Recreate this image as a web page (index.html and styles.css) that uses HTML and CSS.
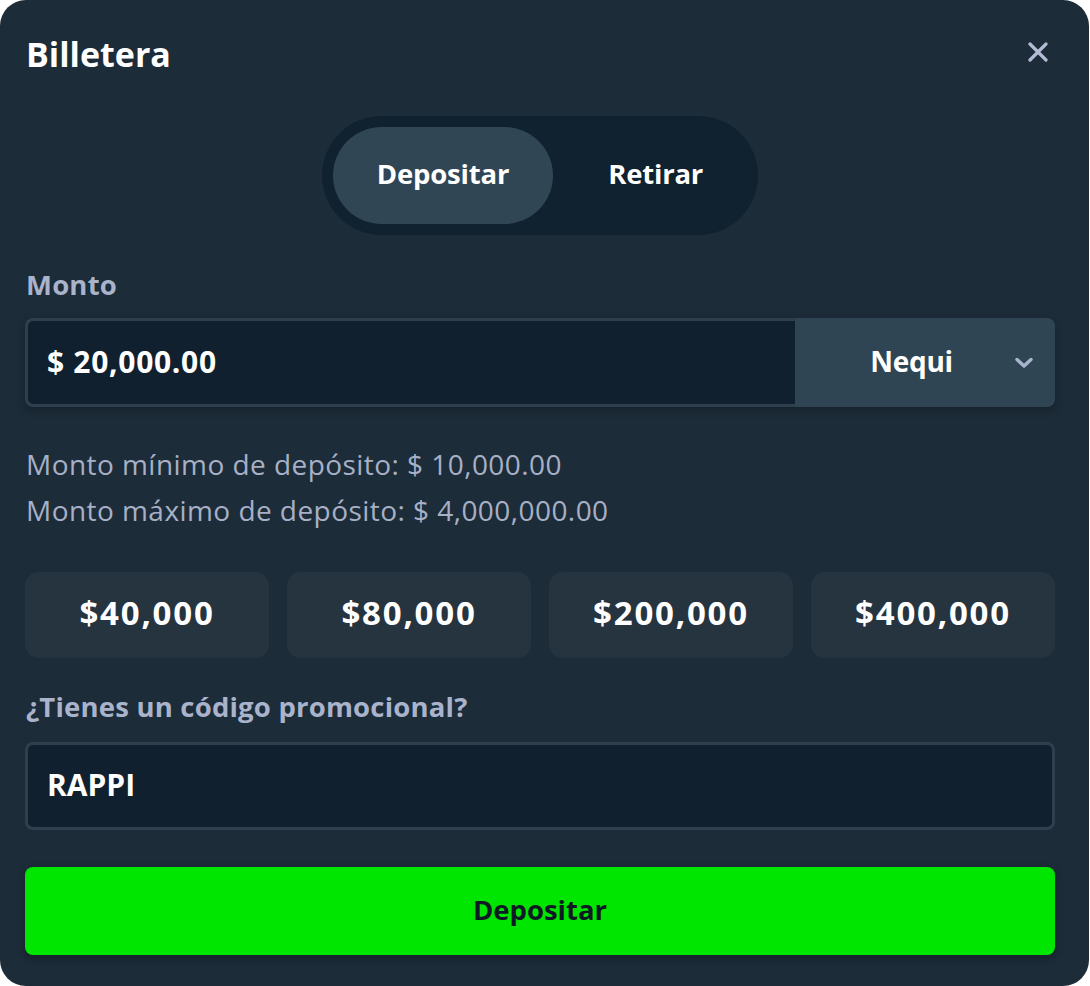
FILE: index.html
```html
<!DOCTYPE html>
<html lang="es">
<head>
<meta charset="utf-8">
<title>Billetera</title>
<link rel="stylesheet" href="styles.css">
</head>
<body>
<div class="modal">
  <div class="header">
    <h1 class="title">Billetera</h1>
    <button class="close" aria-label="Cerrar">
      <svg width="20" height="20" viewBox="0 0 20 20"><path d="M2 2 L18 18 M18 2 L2 18" stroke="#b3bcd4" stroke-width="3.2" stroke-linecap="round"/></svg>
    </button>
  </div>

  <div class="tabs-wrap">
    <div class="tabs">
      <button class="tab active">Depositar</button>
      <button class="tab">Retirar</button>
    </div>
  </div>

  <div class="label label-monto">Monto</div>
  <div class="amount-row">
    <div class="amount-input">$ 20,000.00</div>
    <div class="method">
      <span class="method-name">Nequi</span>
      <svg class="chev" width="20" height="12" viewBox="0 0 20 12"><path d="M3 2.5 L10 9 L17 2.5" fill="none" stroke="#a9b3cc" stroke-width="3.4" stroke-linecap="round" stroke-linejoin="round"/></svg>
    </div>
  </div>

  <div class="limits">
    <p>Monto mínimo de depósito: $ 10,000.00</p>
    <p>Monto máximo de depósito: $ 4,000,000.00</p>
  </div>

  <div class="quick">
    <button class="quick-btn">$40,000</button>
    <button class="quick-btn">$80,000</button>
    <button class="quick-btn">$200,000</button>
    <button class="quick-btn">$400,000</button>
  </div>

  <div class="label label-promo">¿Tienes un código promocional?</div>
  <div class="promo-input">RAPPI</div>

  <button class="submit">Depositar</button>
</div>
</body>
</html>
```

FILE: styles.css
```css
* { box-sizing: border-box; }
html, body { margin: 0; padding: 0; background: #ffffff; }
body { font-family: "Open Sans", "Liberation Sans", sans-serif; }

.modal {
  width: 1089px;
  height: 986px;
  background: #1d2c39;
  border-radius: 26px;
  padding: 0 34px 31px 25px;
  display: flex;
  flex-direction: column;
  color: #ffffff;
}

.header {
  height: 110px;
  display: flex;
  align-items: center;
  justify-content: space-between;
}
.title {
  margin: 0 0 2px;
  font-size: 34px;
  font-weight: 700;
  line-height: 1;
  padding-left: 1px;
}
.close {
  background: none;
  border: 0;
  padding: 0;
  width: 20px;
  height: 20px;
  margin-right: 7px;
  margin-top: -6px;
  display: flex;
}

.tabs-wrap {
  margin-top: 6px;
  display: flex;
  justify-content: center;
}
.tabs {
  height: 119px;
  padding: 11px;
  background: #10212f;
  border-radius: 60px;
  display: flex;
  gap: 11px;
}
.tab {
  border: 0;
  background: transparent;
  color: #ffffff;
  font-family: inherit;
  font-weight: 700;
  font-size: 27.5px;
  padding: 0 44px 4px;
  border-radius: 50px;
  height: 97px;
  letter-spacing: -0.2px;
}
.tab.active { background: #314655; }

.label {
  color: #a9b3cb;
  font-weight: 700;
  font-size: 27.5px;
  line-height: 30px;
  letter-spacing: 0.2px;
}
.label-monto { margin-top: 35px; padding-left: 1px; }

.amount-row {
  margin-top: 18px;
  height: 89px;
  display: flex;
  border-radius: 8px;
  box-shadow: 0 3px 8px rgba(0, 0, 0, 0.25);
}
.amount-input {
  flex: 1;
  background: #10202e;
  border: 3px solid #2e404e;
  border-right: 0;
  border-radius: 8px 0 0 8px;
  display: flex;
  align-items: center;
  padding: 0 0 2px 19px;
  font-size: 30px;
  font-weight: 700;
  letter-spacing: 0.7px;
}
.method {
  width: 260px;
  background: #2f4553;
  border-radius: 0 8px 8px 0;
  display: flex;
  align-items: center;
  padding: 0 21px 0 14px;
}
.method-name {
  flex: 1;
  text-align: center;
  font-size: 28px;
  font-weight: 700;
  letter-spacing: -0.3px;
  padding-bottom: 3px;
}
.chev { flex: none; }

.limits {
  margin-top: 34px;
  color: #a7b0c6;
  font-size: 28px;
  line-height: 46px;
  padding-left: 1px;
  letter-spacing: 0.45px;
}
.limits p { margin: 0; }

.quick {
  margin-top: 39px;
  display: grid;
  grid-template-columns: repeat(4, 1fr);
  gap: 18px;
}
.quick-btn {
  height: 86px;
  border: 0;
  border-radius: 14px;
  background: #263440;
  color: #ffffff;
  font-family: inherit;
  font-weight: 700;
  font-size: 33px;
  letter-spacing: 1.8px;
  padding: 0 0 5px;
}

.label-promo { margin-top: 34px; padding-left: 1px; }

.promo-input {
  margin-top: 20px;
  height: 88px;
  background: #10202e;
  border: 3px solid #2e404e;
  border-radius: 8px;
  display: flex;
  align-items: center;
  padding: 0 0 3px 19px;
  font-size: 30px;
  font-weight: 700;
}

.submit {
  margin-top: 37px;
  height: 88px;
  border: 0;
  border-radius: 8px;
  background: #00e600;
  color: #0d1a24;
  font-family: inherit;
  font-weight: 700;
  font-size: 27.5px;
  padding: 0 0 4px;
  box-shadow: 0 3px 8px rgba(0, 0, 0, 0.3);
}
```
